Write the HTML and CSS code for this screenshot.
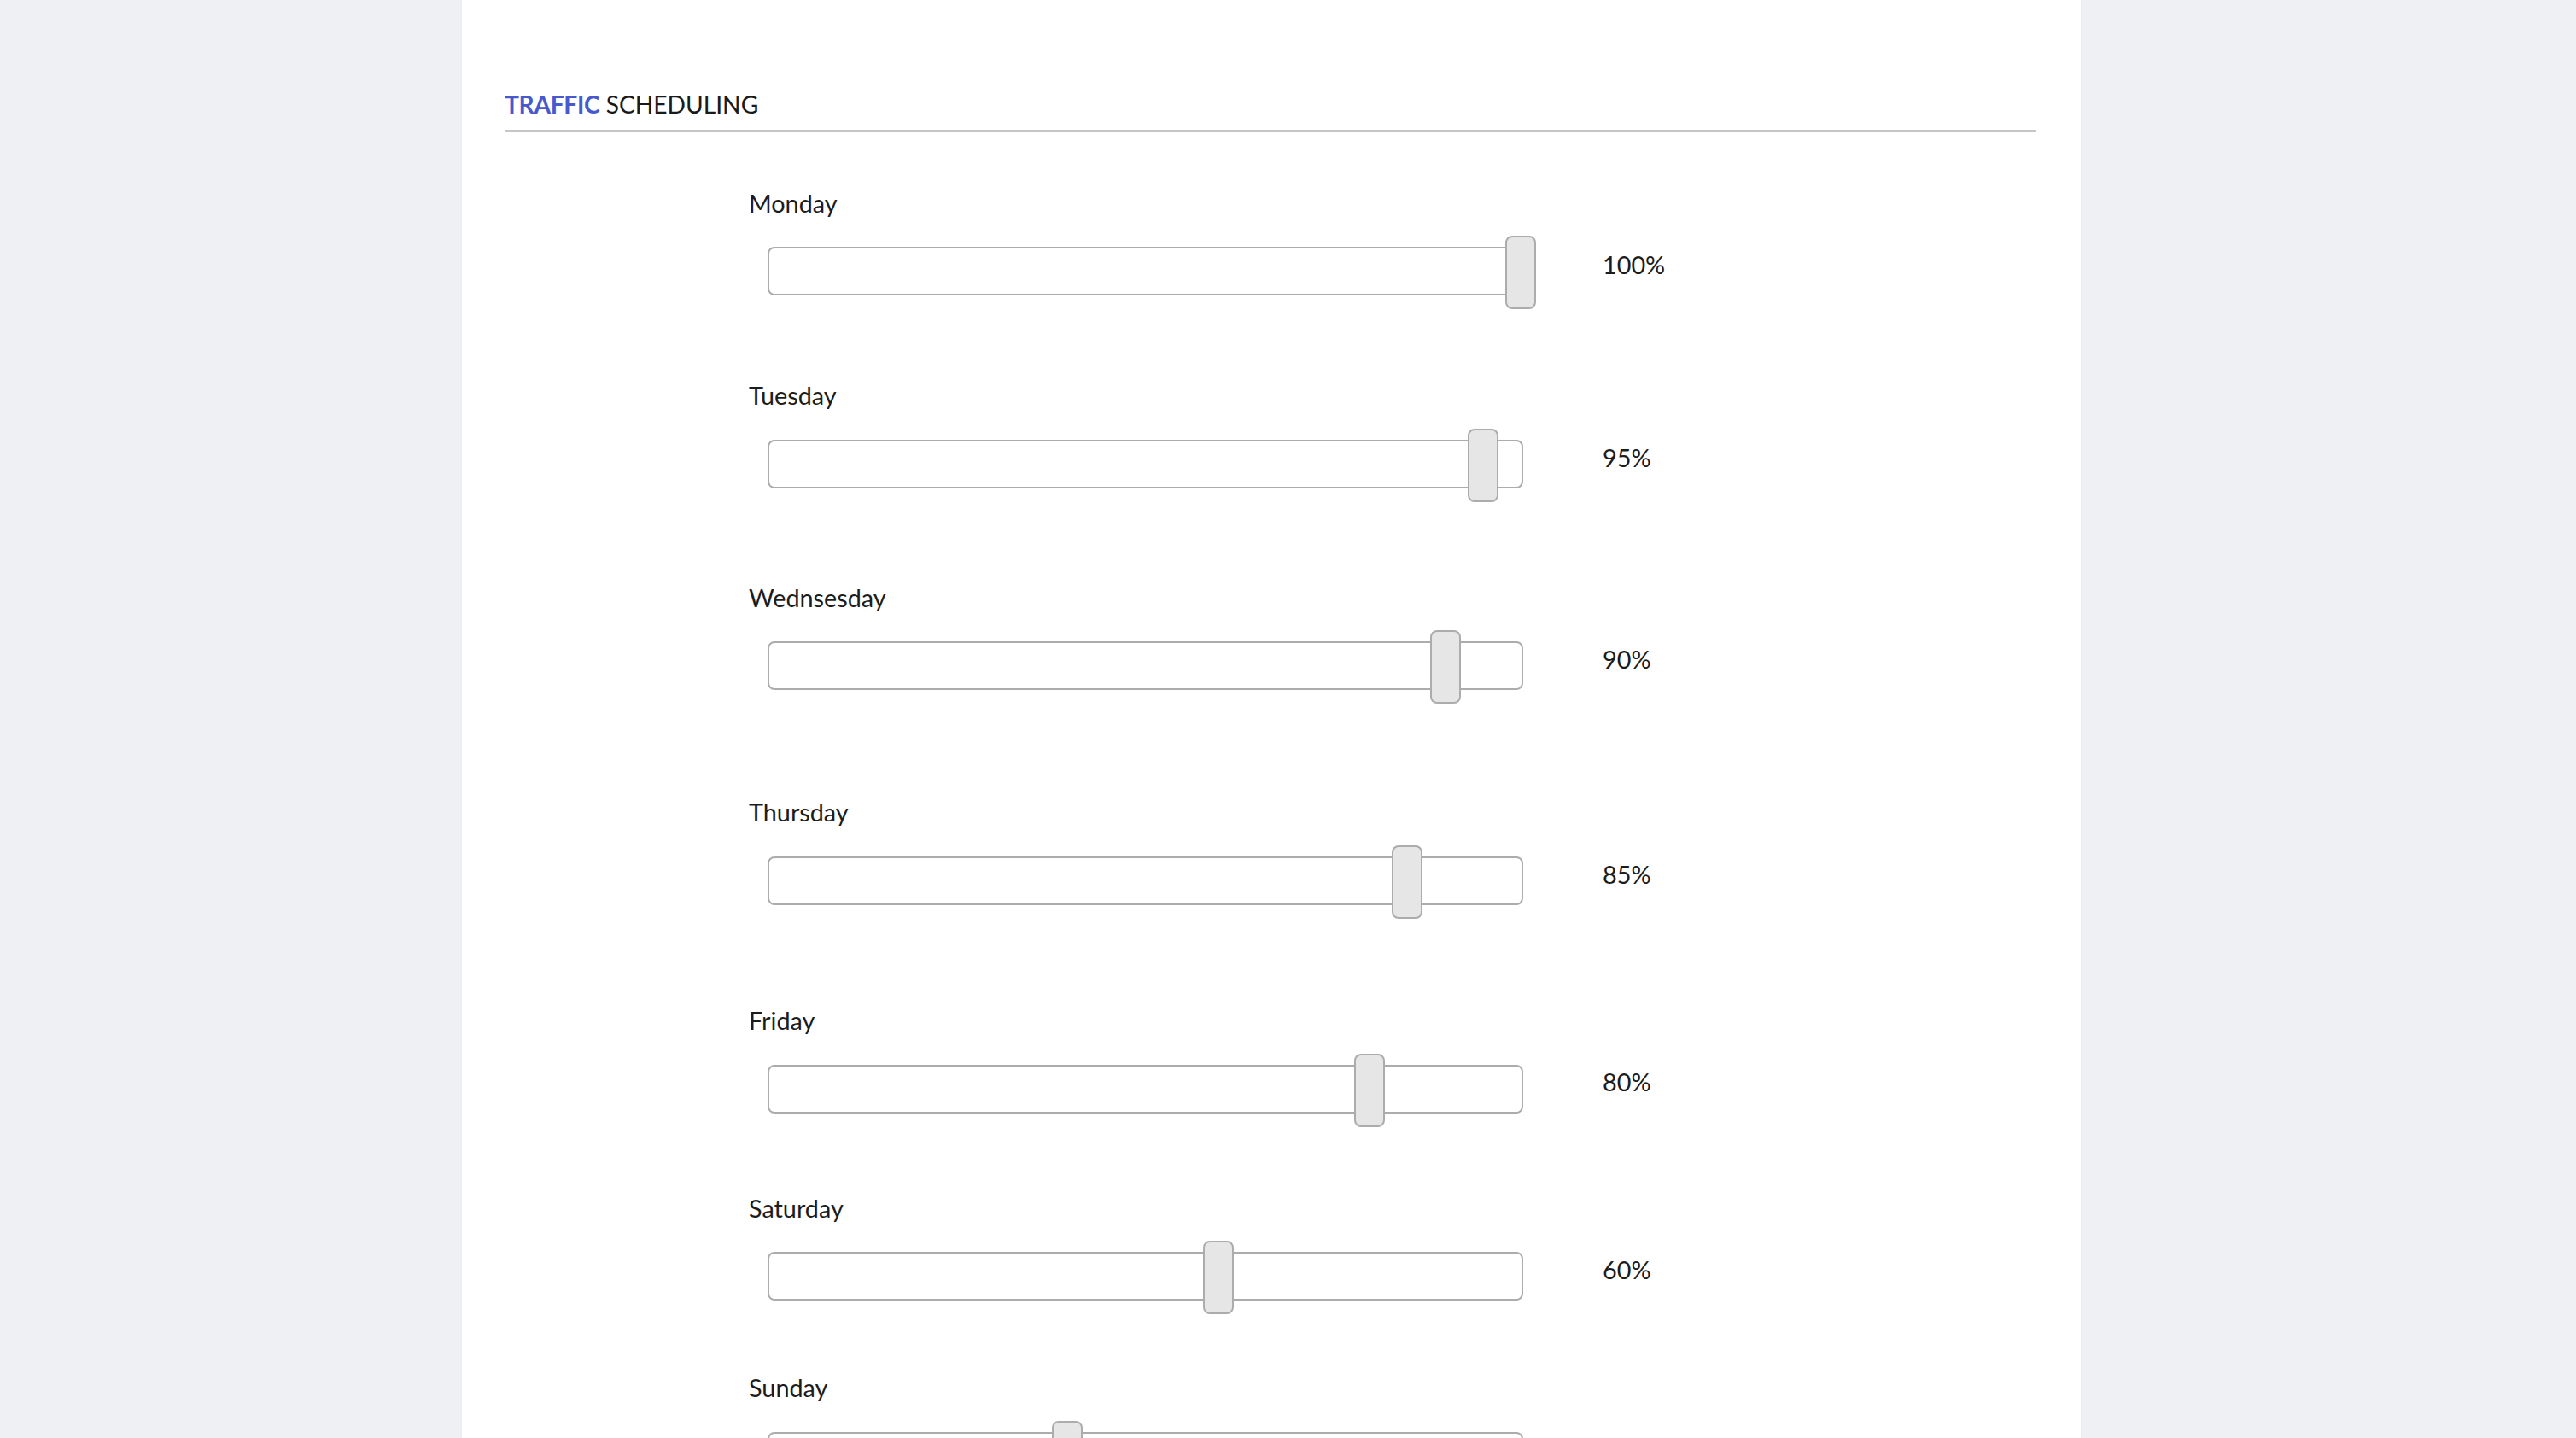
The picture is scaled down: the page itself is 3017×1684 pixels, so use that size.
FILE: index.html
```html
<!DOCTYPE html>
<html lang="en">
<head>
<meta charset="utf-8">
<title>Traffic Scheduling</title>
<link rel="stylesheet" href="styles.css">
</head>
<body>
<div class="page">
  <section class="card">
    <h2 class="section-title"><span class="accent">TRAFFIC</span> SCHEDULING</h2>
    <div class="rows">
      <div class="row">
        <div class="label">Monday</div>
        <div class="control">
          <div class="slider"><div class="track"></div><div class="thumb" style="left: calc(100% - 21px)"></div></div>
          <div class="value">100%</div>
        </div>
      </div>
      <div class="row">
        <div class="label">Tuesday</div>
        <div class="control">
          <div class="slider"><div class="track"></div><div class="thumb" style="left: calc(95% - 21px)"></div></div>
          <div class="value">95%</div>
        </div>
      </div>
      <div class="row">
        <div class="label">Wednsesday</div>
        <div class="control">
          <div class="slider"><div class="track"></div><div class="thumb" style="left: calc(90% - 21px)"></div></div>
          <div class="value">90%</div>
        </div>
      </div>
      <div class="row">
        <div class="label">Thursday</div>
        <div class="control">
          <div class="slider"><div class="track"></div><div class="thumb" style="left: calc(85% - 21px)"></div></div>
          <div class="value">85%</div>
        </div>
      </div>
      <div class="row">
        <div class="label">Friday</div>
        <div class="control">
          <div class="slider"><div class="track"></div><div class="thumb" style="left: calc(80% - 21px)"></div></div>
          <div class="value">80%</div>
        </div>
      </div>
      <div class="row">
        <div class="label">Saturday</div>
        <div class="control">
          <div class="slider"><div class="track"></div><div class="thumb" style="left: calc(60% - 21px)"></div></div>
          <div class="value">60%</div>
        </div>
      </div>
      <div class="row">
        <div class="label">Sunday</div>
        <div class="control">
          <div class="slider"><div class="track"></div><div class="thumb" style="left: calc(40% - 21px)"></div></div>
          <div class="value">40%</div>
        </div>
      </div>
    </div>
  </section>
</div>
</body>
</html>
```

FILE: styles.css
```css
html, body {
  margin: 0;
  padding: 0;
  background: #eff0f4;
}

body {
  font-family: Lato, "Open Sans", "Liberation Sans", sans-serif;
  font-size: 28.8px;
  line-height: 1.2;
  color: #1c1c1c;
}

.page {
  padding-left: 541px;
}

.card {
  width: 1896px;
  box-sizing: border-box;
  background: #ffffff;
  padding: 106px 52px 120px 50px;
  box-shadow: 0 0 2px rgba(0, 0, 0, 0.06);
  min-height: 1900px;
}

.section-title {
  margin: 0;
  font-size: 28.2px;
  font-weight: 400;
  line-height: 1.2;
  color: #1a1a1a;
  padding-bottom: 12px;
  border-bottom: 2px solid #c6c6c6;
}

.accent {
  color: #4759cc;
  font-weight: 700;
  letter-spacing: -0.3px;
}

.rows {
  display: flex;
  flex-direction: column;
  margin-top: 67px;
  padding-left: 286px;
}

.row {
  display: flex;
  flex-direction: column;
}

.row:nth-child(2) { margin-top: 84px; }
.row:nth-child(3) { margin-top: 95px; }
.row:nth-child(4) { margin-top: 110px; }
.row:nth-child(5) { margin-top: 102px; }
.row:nth-child(6) { margin-top: 78px; }
.row:nth-child(7) { margin-top: 69px; }

.label {
  line-height: 1.2;
  margin-bottom: 21px;
}

.control {
  display: flex;
  align-items: center;
  padding-left: 22px;
}

.slider {
  position: relative;
  width: 885px;
  height: 86px;
  flex: none;
}

.track {
  margin-top: 13px;
  height: 57px;
  box-sizing: border-box;
  border: 2px solid #acacac;
  border-radius: 8px;
  background: #ffffff;
}

.thumb {
  position: absolute;
  top: 0;
  width: 36px;
  height: 86px;
  box-sizing: border-box;
  border: 2px solid #acacac;
  border-radius: 8px;
  background: #e6e6e6;
}

.value {
  margin-left: 93px;
  margin-bottom: 18px;
  line-height: 1.2;
}
```
